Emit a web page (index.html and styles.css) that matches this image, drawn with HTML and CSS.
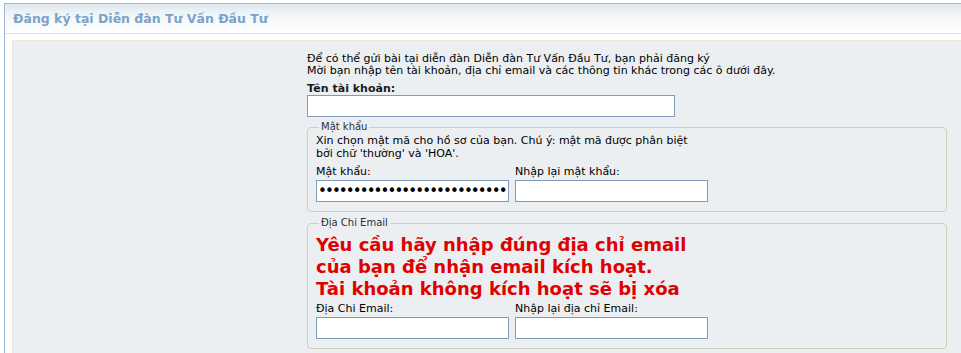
FILE: index.html
```html
<!DOCTYPE html>
<html lang="vi">
<head>
    <meta charset="UTF-8">
    <title>Đăng ký tại Diễn đàn Tư Vấn Đầu Tư</title>
    <link rel="stylesheet" href="styles.css">
</head>
<body>
    <div class="tborder">
        <div class="tcat">Đăng ký tại Diễn đàn Tư Vấn Đầu Tư</div>
        <div class="panelsurround">
            <div class="panel">
                <div class="form-col">
                    <div class="intro">
                        Để có thể gửi bài tại diễn đàn Diễn đàn Tư Vấn Đầu Tư, bạn phải đăng ký<br>
                        Mời bạn nhập tên tài khoản, địa chỉ email và các thông tin khác trong các ô dưới đây.
                    </div>
                    <div class="label-bold">Tên tài khoản:</div>
                    <input type="text" class="bginput username">

                    <fieldset class="fieldset">
                        <legend>Mật khẩu</legend>
                        <div class="desc">Xin chọn mật mã cho hồ sơ của bạn. Chú ý: mật mã được phân biệt<br>bởi chữ 'thường' và 'HOA'.</div>
                        <div class="pair">
                            <div class="field">
                                <div class="smallfont">Mật khẩu:</div>
                                <input type="password" class="bginput half" value="abcdefghijklmnopqrstuvwxyz0123">
                            </div>
                            <div class="field">
                                <div class="smallfont">Nhập lại mật khẩu:</div>
                                <input type="password" class="bginput half">
                            </div>
                        </div>
                    </fieldset>

                    <fieldset class="fieldset">
                        <legend>Địa Chi Email</legend>
                        <div class="warn">Yêu cầu hãy nhập đúng địa chỉ email<br>của bạn để nhận email kích hoạt.<br>Tài khoản không kích hoạt sẽ bị xóa</div>
                        <div class="pair pair-tight">
                            <div class="field">
                                <div class="smallfont">Địa Chi Email:</div>
                                <input type="text" class="bginput half">
                            </div>
                            <div class="field">
                                <div class="smallfont">Nhập lại địa chỉ Email:</div>
                                <input type="text" class="bginput half">
                            </div>
                        </div>
                    </fieldset>
                </div>
            </div>
        </div>
    </div>
</body>
</html>
```

FILE: styles.css
```css
body {
    margin: 0;
    padding: 3px 0 0 4px;
    background: #ffffff;
    font-family: "DejaVu Sans", Verdana, sans-serif;
    font-size: 11px;
    color: #000000;
    overflow: hidden;
}

.tborder {
    border-top: 1px solid #9fbad4;
    border-left: 1px solid #9fbad4;
    background: #ffffff;
    height: 400px;
}

.tcat {
    height: 29px;
    line-height: 30px;
    padding-left: 8px;
    background: linear-gradient(to bottom, #dfe9f0, #f4f7f9 45%, #ffffff);
    border-bottom: 1px solid #dde3e8;
    color: #78a4cc;
    font-weight: bold;
    font-size: 12.5px;
}

.panelsurround {
    padding: 6px 0 0 7px;
}

.panel {
    border-top: 1px solid #ece8d4;
    border-left: 1px solid #e6e6e0;
    background: #ebeff2;
    padding: 12px 0 0 294px;
    height: 360px;
}

.form-col {
    width: 640px;
}

.intro {
    line-height: 12px;
    color: #000000;
}

.label-bold {
    font-weight: bold;
    margin-top: 5px;
    line-height: 13px;
    color: #1a1a1a;
}

.bginput {
    box-sizing: border-box;
    height: 22px;
    margin: 0;
    border: 1px solid #7f9db9;
    background: #ffffff;
    font-family: "DejaVu Sans", Verdana, sans-serif;
    font-size: 11px;
    padding: 1px 2px;
}

.username {
    width: 368px;
    display: block;
}

.fieldset {
    margin: 4px 0 0 0;
    padding: 0 8px 9px 8px;
    border: 1px solid #d0d0bf;
    border-radius: 4px;
}

.fieldset + .fieldset {
    margin-top: 5px;
}

.fieldset legend {
    font-size: 10px;
    color: #2f2f2f;
    padding: 0 2px;
    margin-left: 3px;
    line-height: 12px;
}

.desc {
    line-height: 13px;
    margin-top: 1px;
}

.pair {
    display: flex;
    gap: 6px;
    margin-top: 5px;
}

.pair-tight {
    margin-top: 2px;
}

.smallfont {
    line-height: 14px;
    margin-bottom: 1px;
}

.half {
    width: 193px;
    display: block;
}

input[type="password"] {
    font-size: 15px;
    letter-spacing: -1.9px;
    padding-left: 1px;
}

.warn {
    color: #e00000;
    font-weight: bold;
    font-size: 18px;
    line-height: 22px;
    margin-top: 5px;
}
```
